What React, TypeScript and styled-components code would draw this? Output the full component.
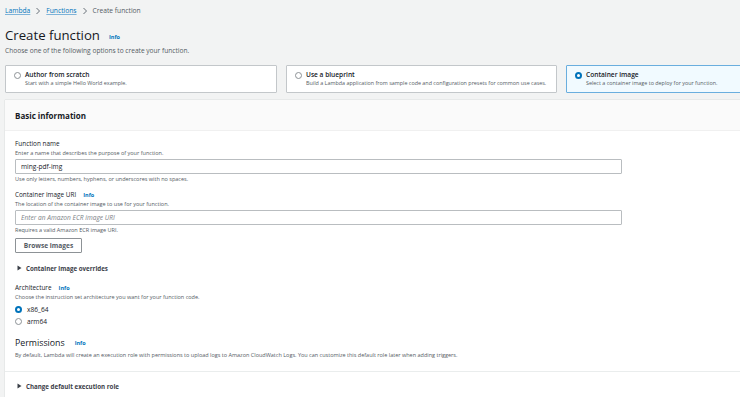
import React from "react";
import styled, { createGlobalStyle } from "styled-components";

const GlobalStyle = createGlobalStyle`
  html, body {
    margin: 0;
    padding: 0;
    overflow: hidden;
    background: #f2f3f3;
  }
  body {
    font-family: "Open Sans", "Noto Sans", Arial, sans-serif;
    color: #16191f;
  }
`;

const Page = styled.div`
  width: 833px;
  padding: 6px 0 0 5px;
`;

const Breadcrumbs = styled.nav`
  display: flex;
  align-items: center;
  gap: 5px;
  font-size: 6.7px;
  line-height: 10px;
  color: #545b64;
`;

const Crumb = styled.a`
  color: #0073bb;
  text-decoration: underline;
  text-decoration-color: #7fb3d8;
`;

const Chevron = styled.svg`
  width: 6px;
  height: 8px;
`;

const TitleRow = styled.div`
  display: flex;
  align-items: center;
  gap: 9px;
  margin-top: 8px;
  height: 22px;
`;

const Title = styled.h1`
  margin: 0;
  font-size: 13.2px;
  font-weight: 400;
  line-height: 20px;
`;

const Info = styled.a<{ $up?: boolean }>`
  font-size: 5.5px;
  font-weight: 700;
  color: #0073bb;
  position: relative;
  top: ${({ $up }) => ($up ? "0" : "2px")};
`;

const Subtitle = styled.p`
  margin: 0;
  font-size: 6.6px;
  line-height: 10px;
  color: #545b64;
`;

const Tiles = styled.div`
  display: grid;
  grid-template-columns: 272px 271px 272px;
  gap: 9px;
  margin-top: 9px;
`;

const Tile = styled.div<{ $selected?: boolean }>`
  box-sizing: border-box;
  height: 28px;
  display: flex;
  align-items: flex-start;
  gap: 4px;
  padding: 4px 8px;
  background: ${({ $selected }) => ($selected ? "#f1faff" : "#ffffff")};
  border: 1px solid ${({ $selected }) => ($selected ? "#6aaede" : "#c3c7ca")};
  border-radius: 1px;
`;

const Radio = styled.span<{ $checked?: boolean }>`
  box-sizing: border-box;
  flex: none;
  width: 7px;
  height: 7px;
  margin-top: 1.5px;
  border-radius: 50%;
  background: #ffffff;
  border: ${({ $checked }) =>
    $checked ? "2px solid #0073bb" : "1px solid #8d9296"};
`;

const TileText = styled.div`
  display: flex;
  flex-direction: column;
  min-width: 0;
`;

const TileTitle = styled.span`
  font-size: 6.6px;
  font-weight: 600;
  line-height: 9px;
`;

const TileDesc = styled.span`
  font-size: 5.4px;
  line-height: 9px;
  color: #545b64;
  white-space: nowrap;
`;

const Panel = styled.section`
  margin-top: 7px;
  background: #ffffff;
  box-shadow: 0 0 1px 0 rgba(0, 28, 36, 0.25);
`;

const PanelHeader = styled.header`
  height: 31px;
  display: flex;
  align-items: center;
  padding-left: 10px;
  background: #fafafa;
  border-bottom: 1px solid #f0f0f0;
  box-sizing: border-box;
`;

const PanelTitle = styled.h2`
  margin: 0;
  font-size: 8px;
  font-weight: 700;
`;

const PanelBody = styled.div`
  padding: 8px 10px 12px;
`;

const Field = styled.div<{ $gap?: number }>`
  margin-top: ${({ $gap }) => $gap ?? 0}px;
`;

const LabelRow = styled.div`
  display: flex;
  align-items: center;
  gap: 7px;
  height: 10px;
`;

const Label = styled.label`
  font-size: 6.4px;
  line-height: 10px;
  color: #16191f;
`;

const Desc = styled.div<{ $gap?: number }>`
  margin-top: ${({ $gap }) => $gap ?? 0}px;
  font-size: 5.5px;
  line-height: 8px;
  color: #545b64;
`;

const Input = styled.input`
  box-sizing: border-box;
  display: block;
  width: 607px;
  height: 15px;
  margin: 2px 0 1px;
  padding: 0 5px;
  border: 1px solid #b9bdc0;
  border-radius: 1px;
  font-family: inherit;
  font-size: 6.6px;
  color: #16191f;
  background: #ffffff;
  outline: none;

  &::placeholder {
    color: #7d8388;
    font-style: italic;
  }
`;

const Button = styled.button`
  box-sizing: border-box;
  display: block;
  margin-top: 4px;
  height: 15px;
  width: 67px;
  padding: 0;
  background: #ffffff;
  border: 1px solid #8d9296;
  border-radius: 1px;
  font-family: inherit;
  font-size: 6.6px;
  font-weight: 700;
  color: #545b64;
`;

const Expander = styled.div<{ $gap?: number }>`
  display: flex;
  align-items: center;
  gap: 4px;
  height: 10px;
  margin-top: ${({ $gap }) => $gap ?? 0}px;
  padding-left: 2px;
  font-size: 6.2px;
  font-weight: 700;
  color: #3b4048;
`;

const Caret = styled.svg`
  width: 5px;
  height: 6px;
`;

const Options = styled.div`
  display: flex;
  flex-direction: column;
  margin-top: 2px;
`;

const Option = styled.div`
  display: flex;
  align-items: center;
  gap: 5px;
  height: 12px;
  font-size: 6.6px;
  color: #16191f;
`;

const OptionRadio = styled(Radio)`
  margin-top: 0;
`;

const SectionTitle = styled.h3`
  margin: 0;
  font-size: 8.8px;
  font-weight: 400;
  line-height: 14px;
`;

const SectionRow = styled.div`
  display: flex;
  align-items: center;
  gap: 10px;
  margin-top: 9px;
  height: 14px;
`;

const Divider = styled.div`
  border-top: 1px solid #eaeded;
`;

const Footer = styled.div`
  padding: 9px 10px 20px;
`;

const Arrow = () => (
  <Chevron viewBox="0 0 6 8">
    <path d="M1.5 1l3 3-3 3" fill="none" stroke="#687078" strokeWidth="1" />
  </Chevron>
);

const Triangle = () => (
  <Caret viewBox="0 0 5 6">
    <path d="M0.5 0.5L4.5 3 0.5 5.5z" fill="#3b4048" />
  </Caret>
);

const tiles = [
  { title: "Author from scratch", desc: "Start with a simple Hello World example." },
  {
    title: "Use a blueprint",
    desc: "Build a Lambda application from sample code and configuration presets for common use cases.",
  },
  {
    title: "Container image",
    desc: "Select a container image to deploy for your function.",
    selected: true,
  },
];

export default function App() {
  return (
    <>
      <GlobalStyle />
      <Page>
        <Breadcrumbs>
          <Crumb>Lambda</Crumb>
          <Arrow />
          <Crumb>Functions</Crumb>
          <Arrow />
          <span>Create function</span>
        </Breadcrumbs>

        <TitleRow>
          <Title>Create function</Title>
          <Info>Info</Info>
        </TitleRow>
        <Subtitle>Choose one of the following options to create your function.</Subtitle>

        <Tiles>
          {tiles.map((t) => (
            <Tile key={t.title} $selected={t.selected}>
              <Radio $checked={t.selected} />
              <TileText>
                <TileTitle>{t.title}</TileTitle>
                <TileDesc>{t.desc}</TileDesc>
              </TileText>
            </Tile>
          ))}
        </Tiles>

        <Panel>
          <PanelHeader>
            <PanelTitle>Basic information</PanelTitle>
          </PanelHeader>
          <PanelBody>
            <Field>
              <LabelRow>
                <Label>Function name</Label>
              </LabelRow>
              <Desc>Enter a name that describes the purpose of your function.</Desc>
              <Input defaultValue="ming-pdf-img" />
              <Desc>Use only letters, numbers, hyphens, or underscores with no spaces.</Desc>
            </Field>

            <Field $gap={7}>
              <LabelRow>
                <Label>Container image URI</Label>
                <Info $up>Info</Info>
              </LabelRow>
              <Desc>The location of the container image to use for your function.</Desc>
              <Input placeholder="Enter an Amazon ECR image URI" />
              <Desc>Requires a valid Amazon ECR image URI.</Desc>
              <Button>Browse images</Button>
            </Field>

            <Expander $gap={10}>
              <Triangle />
              Container image overrides
            </Expander>

            <Field $gap={10}>
              <LabelRow>
                <Label>Architecture</Label>
                <Info $up>Info</Info>
              </LabelRow>
              <Desc>Choose the instruction set architecture you want for your function code.</Desc>
              <Options>
                <Option>
                  <OptionRadio $checked />
                  x86_64
                </Option>
                <Option>
                  <OptionRadio />
                  arm64
                </Option>
              </Options>
            </Field>

            <SectionRow>
              <SectionTitle>Permissions</SectionTitle>
              <Info $up>Info</Info>
            </SectionRow>
            <Desc $gap={1}>
              By default, Lambda will create an execution role with permissions to upload logs
              to Amazon CloudWatch Logs. You can customize this default role later when adding
              triggers.
            </Desc>
          </PanelBody>
          <Divider />
          <Footer>
            <Expander>
              <Triangle />
              Change default execution role
            </Expander>
          </Footer>
        </Panel>
      </Page>
    </>
  );
}
